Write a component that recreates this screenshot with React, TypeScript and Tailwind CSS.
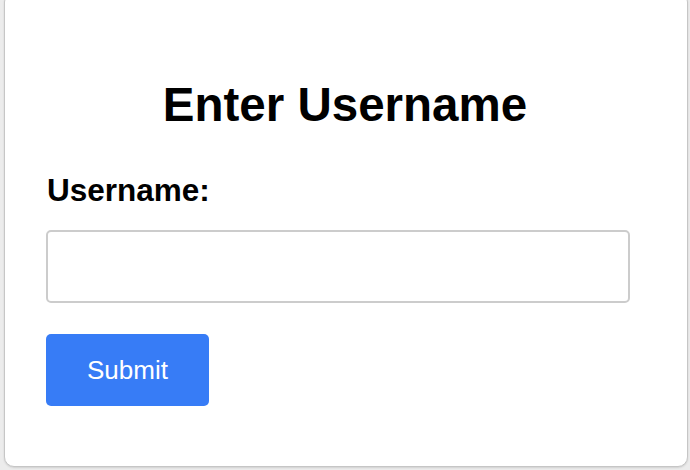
import React from "react";

export default function App() {
  return (
    <div
      className="w-[690px] h-[470px] bg-[#ececec] overflow-hidden flex flex-col pl-[4px] pr-[2px] pb-[3px]"
      style={{ fontFamily: '"Liberation Sans", Arial, Helvetica, sans-serif' }}
    >
      <div className="flex-1 -mt-[8px] bg-white border border-[#c6c6c6] rounded-[10px] shadow-[0_1px_2px_rgba(0,0,0,0.12)] pl-[41px] pt-[85px]">
        <h2 className="text-[47.5px] leading-[54px] font-bold text-black text-center pr-[2px] -ml-[41px]">
          Enter Username
        </h2>
        <form className="flex flex-col" onSubmit={(e) => e.preventDefault()}>
          <label className="mt-[40px] text-[31.5px] leading-[36px] font-bold text-black pl-[1px]">
            Username:
          </label>
          <input
            type="text"
            className="mt-[22px] w-[584px] h-[73px] border-2 border-[#cccccc] rounded-[5px] bg-white px-3 text-[24px] outline-none"
          />
          <button
            type="submit"
            className="mt-[31px] w-[163px] h-[72px] bg-[#377cf6] text-white text-[26px] rounded-[5px] flex items-center justify-center"
          >
            Submit
          </button>
        </form>
      </div>
    </div>
  );
}
